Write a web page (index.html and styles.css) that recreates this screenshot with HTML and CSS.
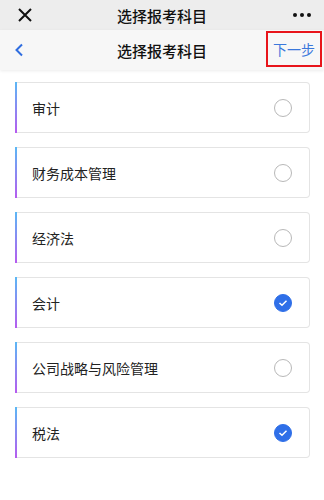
FILE: index.html
```html
<!DOCTYPE html>
<html lang="zh">
<head>
<meta charset="utf-8">
<link rel="stylesheet" href="styles.css">
</head>
<body>
<div class="topbar">
  <svg class="close" width="16" height="16" viewBox="0 0 16 16"><path d="M2 2L14 14M14 2L2 14" stroke="#111" stroke-width="2" fill="none"/></svg>
  <div class="toptitle">选择报考科目</div>
  <svg class="more" width="20" height="6" viewBox="0 0 20 6"><circle cx="3" cy="3" r="2" fill="#111"/><circle cx="10" cy="3" r="2" fill="#111"/><circle cx="17" cy="3" r="2" fill="#111"/></svg>
</div>
<div class="navbar">
  <svg class="back" width="10" height="14" viewBox="0 0 10 14"><path d="M8 1.5L2.5 7L8 12.5" stroke="#2f6de0" stroke-width="2" fill="none"/></svg>
  <div class="navtitle">选择报考科目</div>
  <div class="next">下一步</div>
</div>
<div class="list">
  <div class="card"><span class="name">审计</span><span class="radio"></span></div>
  <div class="card"><span class="name">财务成本管理</span><span class="radio"></span></div>
  <div class="card"><span class="name">经济法</span><span class="radio"></span></div>
  <div class="card"><span class="name">会计</span><span class="radio on"><svg width="10" height="8" viewBox="0 0 10 8"><path d="M1.5 4L4 6.3L8.5 1.8" stroke="#fff" stroke-width="1.5" fill="none"/></svg></span></div>
  <div class="card"><span class="name">公司战略与风险管理</span><span class="radio"></span></div>
  <div class="card"><span class="name">税法</span><span class="radio on"><svg width="10" height="8" viewBox="0 0 10 8"><path d="M1.5 4L4 6.3L8.5 1.8" stroke="#fff" stroke-width="1.5" fill="none"/></svg></span></div>
</div>
</body>
</html>
```
FILE: styles.css
```css
* { box-sizing: border-box; }
body {
  margin: 0;
  background: #fff;
  font-family: "Noto Sans CJK SC", "Noto Sans", sans-serif;
  color: #222;
}
.topbar {
  height: 30px;
  background: #ededed;
  display: grid;
  grid-template-columns: 1fr auto 1fr;
  align-items: center;
  padding: 0 12px;
}
.toptitle { font-size: 15px; color: #111; line-height: 1; font-weight: 500; }
.close { display: block; margin-left: 5px; }
.more { display: block; justify-self: end; }
.navbar {
  height: 40px;
  background: #f7f7f7;
  display: grid;
  grid-template-columns: 1fr auto 1fr;
  align-items: center;
  padding: 0 2px;
  box-shadow: 0 1px 3px rgba(0,0,0,0.08);
  position: relative;
}
.back { display: block; margin-left: 12px; }
.navtitle { font-size: 15px; color: #111; font-weight: 500; }
.next {
  justify-self: end;
  font-size: 14px;
  color: #3b78dc;
  border: 2px solid #e8151b;
  height: 36px;
  width: 56px;
  display: flex;
  align-items: center;
  justify-content: center;
  margin-top: -2px;
}
.list {
  padding: 12px 14px 0 15px;
  display: flex;
  flex-direction: column;
  gap: 14px;
}
.card {
  height: 51px;
  border: 1px solid #e4e4e4;
  border-left: none;
  border-radius: 0 4px 4px 0;
  display: flex;
  align-items: center;
  justify-content: space-between;
  padding: 0 17px 0 17px;
  position: relative;
  background: #fff;
}
.card::before {
  content: "";
  position: absolute;
  left: 0;
  top: -1px;
  bottom: -1px;
  width: 2px;
  background: linear-gradient(#5ab8f5, #b65bef);
}
.name { font-size: 14px; color: #222; }
.radio {
  width: 18px;
  height: 18px;
  border-radius: 50%;
  border: 1px solid #b8b8b8;
  display: flex;
  align-items: center;
  justify-content: center;
}
.radio.on { background: #2f6fe8; border-color: #2f6fe8; }
.radio svg { display: block; }
```
